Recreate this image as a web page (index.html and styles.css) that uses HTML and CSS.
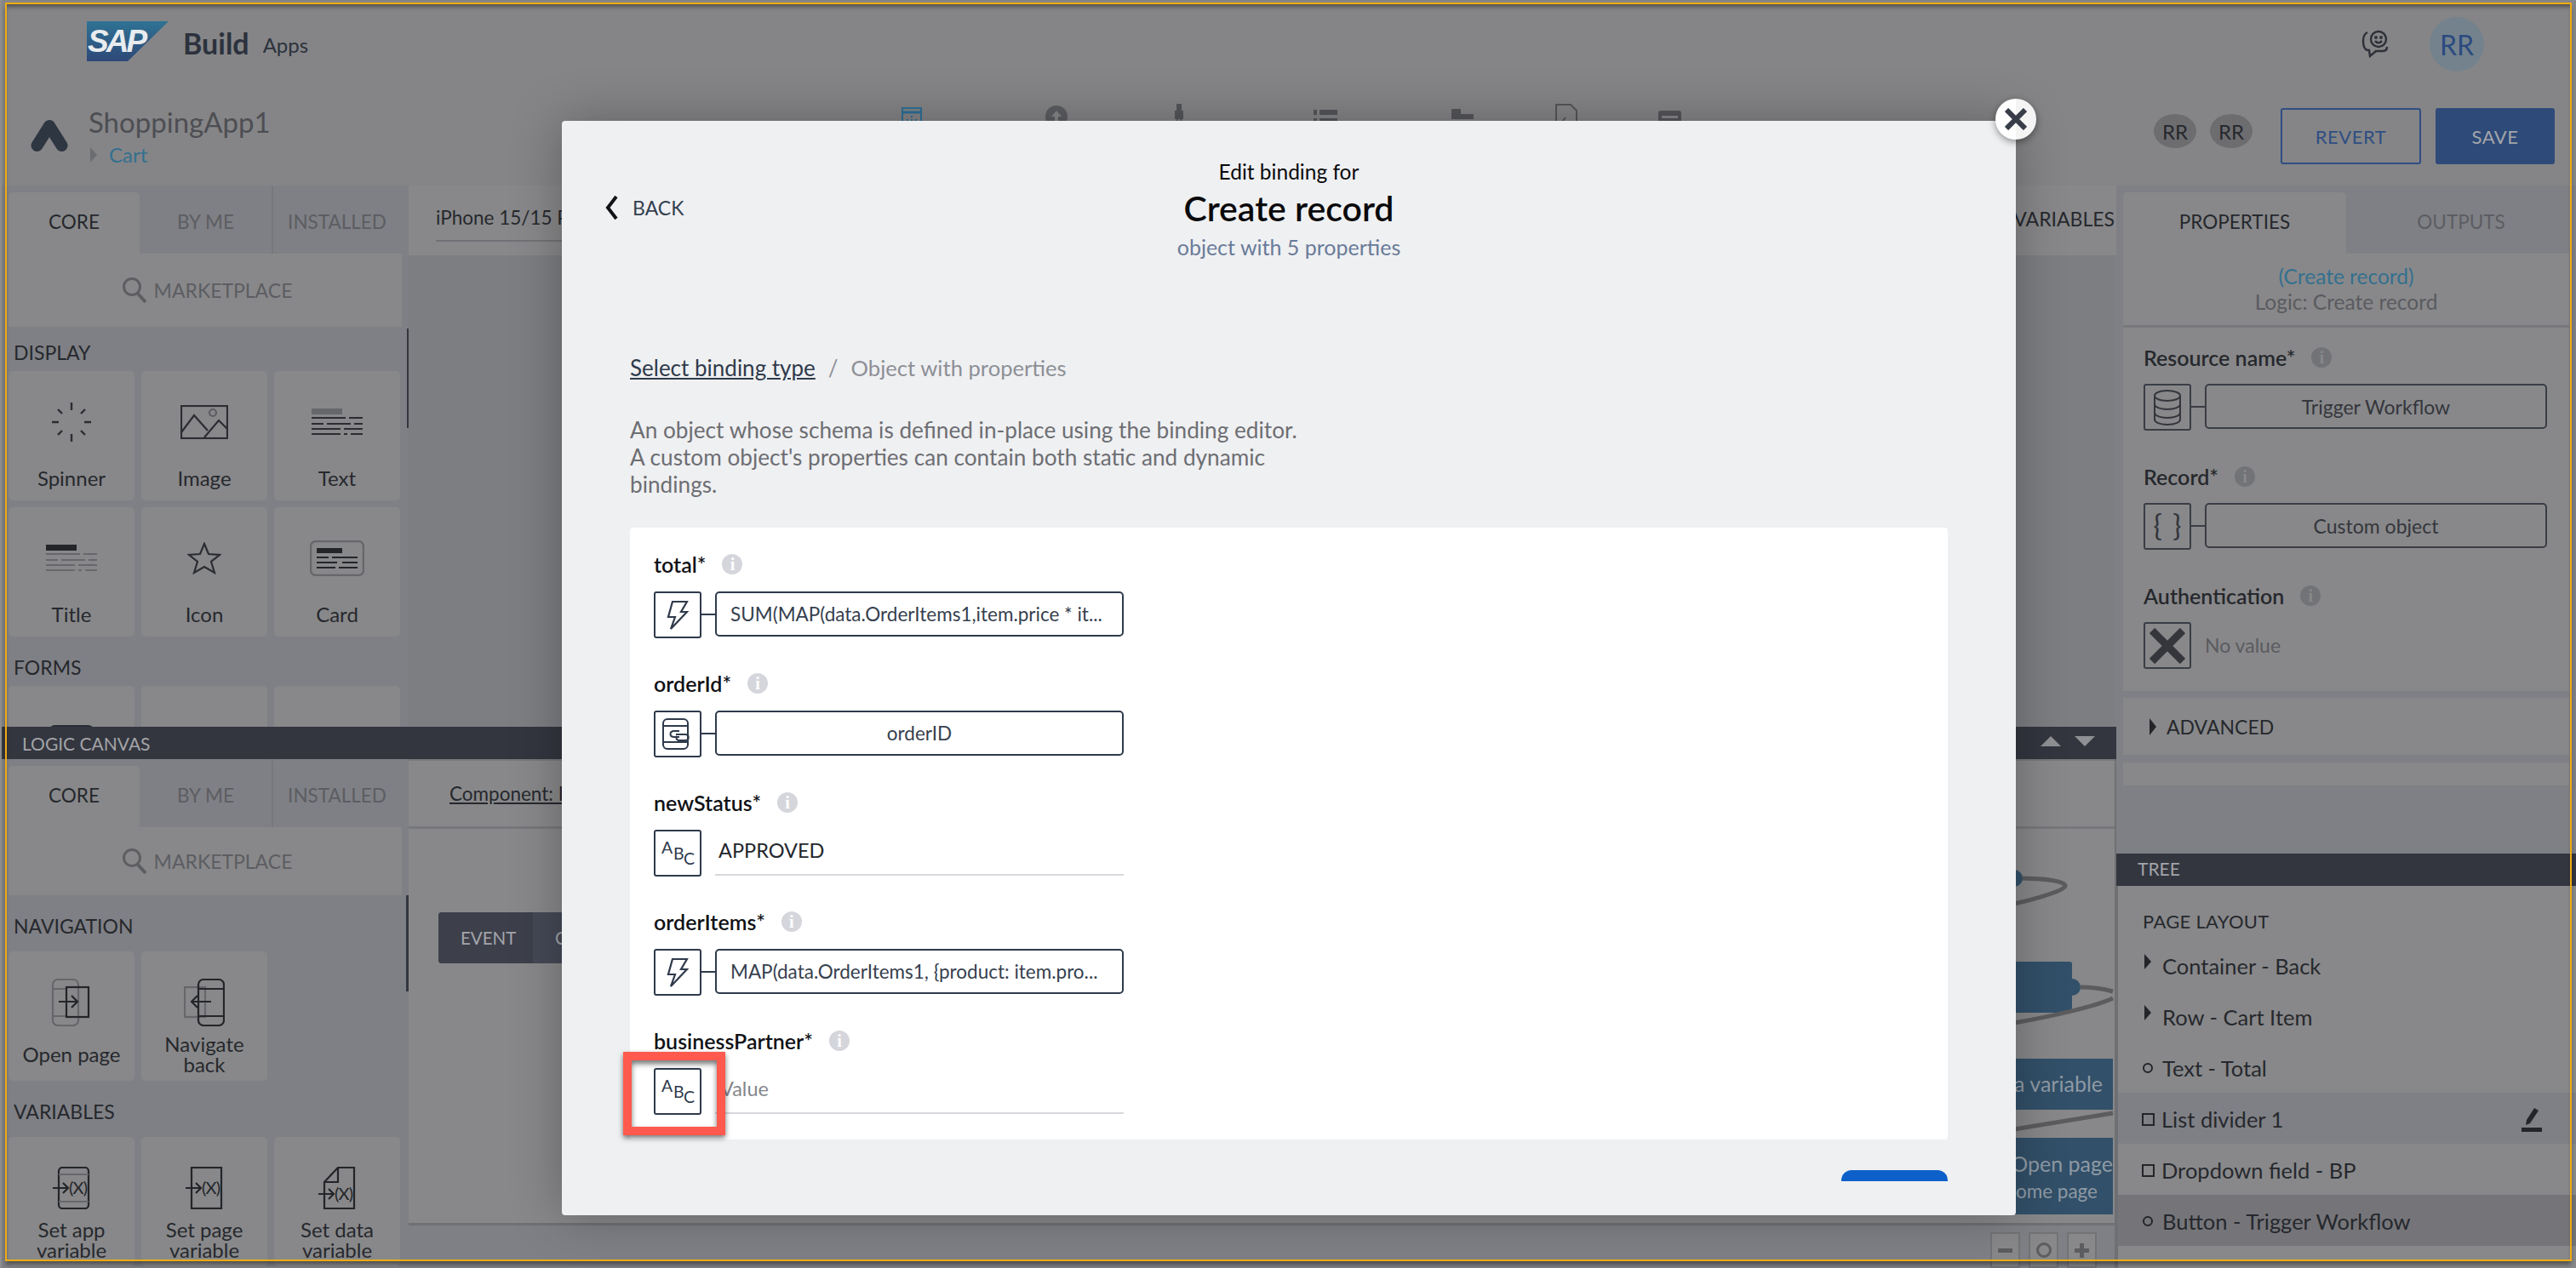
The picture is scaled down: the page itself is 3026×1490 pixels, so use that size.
FILE: index.html
```html
<!DOCTYPE html>
<html lang="en">
<head>
<meta charset="utf-8">
<title>SAP Build Apps</title>
<link rel="stylesheet" href="styles.css">
</head>
<body>
<div class="app">
  <header class="topbar">
    <div class="sap-logo">
      <svg width="96" height="47" viewBox="0 0 96 47"><defs><linearGradient id="sapg" x1="0" y1="0" x2="0" y2="1"><stop offset="0" stop-color="#2f7394"/><stop offset="1" stop-color="#2e4878"/></linearGradient></defs><polygon points="0,0 96,0 48,47 0,47" fill="url(#sapg)"/><text x="1" y="36" class="sap-text">SAP</text></svg>
    </div>
    <span class="build">Build</span><span class="apps">Apps</span>
    <div class="top-right">
      <svg width="32" height="34" viewBox="0 0 32 34" fill="none" stroke="#2d3038" stroke-width="2.4"><path d="M7 3C3 5 2 9 2 13C2 18 3 23 7 24H9L10 31L17 25H25C29 25 30 23 30 20"/><circle cx="20" cy="11" r="9"/><circle cx="17" cy="9" r=".8"/><circle cx="23" cy="9" r=".8"/><path d="M16 13C18 16 22 16 24 13"/></svg>
      <div class="avatar">RR</div>
    </div>
  </header>
  <div class="appbar">
    <div class="brand">
      <svg class="brand-mark" width="44" height="40" viewBox="0 0 44 40" fill="none"><path d="M7.5 31L22 8L36.5 31" stroke="#2e3642" stroke-width="14" stroke-linecap="round" stroke-linejoin="round"/></svg>
      <div class="brand-text">
        <div class="app-name">ShoppingApp1</div>
        <div class="crumb"><span class="crumb-arrow"></span><span>Cart</span></div>
      </div>
    </div>
    <div class="tools">
      <svg class="tool" width="24" height="30" viewBox="0 0 24 30" fill="none" stroke="#2c7099" stroke-width="2"><rect x="1" y="5" width="22" height="24"/><path d="M1 10H23" stroke-width="3"/><path d="M7 18V20M12 14V16M12 18V20M17 18V20"/></svg>
      <svg class="tool" width="28" height="30" viewBox="0 0 28 30"><circle cx="14" cy="15" r="13" fill="#5d5e62"/><path d="M14 8L20 15H16V24H12V15H8Z" fill="#88888a"/></svg>
      <svg class="tool" width="24" height="30" viewBox="0 0 24 30" fill="#55565a"><rect x="9" y="0" width="6" height="12"/><rect x="7" y="8" width="10" height="10"/><rect x="9" y="18" width="1.6" height="12"/><rect x="13.4" y="18" width="1.6" height="12"/></svg>
      <svg class="tool" width="28" height="30" viewBox="0 0 28 30" fill="#55565a"><rect x="0" y="7" width="4" height="6"/><rect x="7" y="7" width="21" height="6"/><rect x="0" y="17" width="4" height="6"/><rect x="7" y="17" width="21" height="6"/></svg>
      <svg class="tool" width="28" height="30" viewBox="0 0 28 30" fill="#55565a"><path d="M1 6H12V12H27V18H1Z"/><rect x="1" y="21" width="26" height="9"/></svg>
      <svg class="tool" width="26" height="30" viewBox="0 0 26 30" fill="none" stroke="#55565a" stroke-width="2"><path d="M1 1H18L25 8V30H1Z"/><path d="M3 28L12 16"/></svg>
      <svg class="tool" width="28" height="30" viewBox="0 0 28 30" fill="#55565a"><rect x="0" y="8" width="27" height="22" rx="3"/><rect x="4" y="14" width="19" height="3" fill="#88888a"/><rect x="4" y="20" width="19" height="3" fill="#88888a"/></svg>
    </div>
    <div class="actions">
      <div class="chip">RR</div>
      <div class="chip">RR</div>
      <button class="btn btn-outline">REVERT</button>
      <button class="btn btn-solid">SAVE</button>
    </div>
  </div>

  <div class="workspace">
    <div class="left-col">
      <section class="editor">
        <aside class="palette">
          <div class="tabs"><div class="tab tab-on">CORE</div><div class="tab">BY ME</div><div class="tab tab-sep">INSTALLED</div></div>
          <div class="market"><svg width="30" height="32" viewBox="0 0 30 32" fill="none" stroke="#5d5e62"><circle cx="12" cy="12" r="9.5" stroke-width="3"/><path d="M18 19L28 30" stroke-width="4"/></svg><span>MARKETPLACE</span></div>
          <div class="scroll-thumb"></div>
          <h3 class="sect sect-first">DISPLAY</h3>
          <div class="tiles">
            <div class="tile tile-tight"><div class="tile-icon"><svg width="48" height="48" viewBox="0 0 48 48" stroke="#2b2d33" stroke-width="2.4"><path d="M24 1V10M24 38V47M1 24H9M39 24H47M8 9L13 14M40 9L35 14M8 39L13 34M40 39L35 34"/></svg></div><div class="tile-label">Spinner</div></div>
            <div class="tile tile-tight"><div class="tile-icon"><svg width="56" height="40" viewBox="0 0 56 40" fill="none" stroke="#2b2d33" stroke-width="2.2"><rect x="1" y="1" width="54" height="38"/><path d="M1 32L16 12L32 30M28 38L45 18L55 28"/><circle cx="38" cy="9" r="4" stroke="#5d5e62"/></svg></div><div class="tile-label">Image</div></div>
            <div class="tile tile-tight"><div class="tile-icon"><svg width="60" height="32" viewBox="0 0 60 32" fill="none" stroke="#2b2d33" stroke-width="2"><rect x="0" y="0" width="36" height="7" fill="#66676b" stroke="none"/><path d="M0 11H40M44 11H60M0 18H14M18 18H46M50 18H60M0 24H34M38 24H60M0 30H34M38 30H42M46 30H60"/></svg></div><div class="tile-label">Text</div></div>
            <div class="tile tile-tight"><div class="tile-icon"><svg width="60" height="32" viewBox="0 0 60 32" fill="none" stroke="#66676b" stroke-width="2"><rect x="0" y="0" width="36" height="7" fill="#232529" stroke="none"/><path d="M0 11H40M44 11H60M0 18H14M18 18H46M50 18H60M0 24H34M38 24H60M0 30H34M38 30H42M46 30H60"/></svg></div><div class="tile-label">Title</div></div>
            <div class="tile tile-tight"><div class="tile-icon"><svg width="40" height="38" viewBox="0 0 40 38" fill="none" stroke="#2b2d33" stroke-width="2.2"><path d="M20 2L25 14L38 15L28 23L32 36L20 29L8 36L12 23L2 15L15 14Z"/></svg></div><div class="tile-label">Icon</div></div>
            <div class="tile tile-tight"><div class="tile-icon"><svg width="64" height="42" viewBox="0 0 64 42" fill="none" stroke="#232529" stroke-width="2"><rect x="1" y="1" width="62" height="40" rx="6" stroke="#66676b" stroke-width="2.4"/><rect x="8" y="9" width="30" height="6" fill="#232529" stroke="none"/><path d="M8 20H22M26 20H56M8 26H32M38 26H56M8 32H30M34 32H56"/></svg></div><div class="tile-label">Card</div></div>
          </div>
          <h3 class="sect sect-forms">FORMS</h3>
          <div class="tiles">
            <div class="tile tile-tight"><div class="tile-icon"><svg width="52" height="28" viewBox="0 0 52 28"><rect width="52" height="28" rx="6" fill="#2b2d33"/></svg></div><div class="tile-label"></div></div>
            <div class="tile tile-tight"></div>
            <div class="tile tile-tight"></div>
          </div>
        </aside>
        <div class="stage">
          <div class="stage-bar"><div class="device">iPhone 15/15 Pro</div><div class="vars">VARIABLES</div></div>
          <div class="stage-view"></div>
        </div>
      </section>

      <div class="logic-bar"><span>LOGIC CANVAS</span><div class="logic-arrows"><i class="arrow-up"></i><i class="arrow-down"></i></div></div>

      <section class="logic">
        <aside class="palette palette-low">
          <div class="tabs"><div class="tab tab-on">CORE</div><div class="tab">BY ME</div><div class="tab tab-sep">INSTALLED</div></div>
          <div class="market"><svg width="30" height="32" viewBox="0 0 30 32" fill="none" stroke="#5d5e62"><circle cx="12" cy="12" r="9.5" stroke-width="3"/><path d="M18 19L28 30" stroke-width="4"/></svg><span>MARKETPLACE</span></div>
          <div class="scroll-thumb scroll-thumb-low"></div>
          <h3 class="sect sect-low">NAVIGATION</h3>
          <div class="tiles">
            <div class="tile"><div class="tile-icon"><svg width="48" height="56" viewBox="0 0 48 56" fill="none" stroke-width="2.2"><rect x="2" y="1" width="30" height="54" rx="6" stroke="#66676b"/><path d="M2 12H18M2 44H18" stroke="#66676b"/><rect x="18" y="10" width="26" height="35" stroke="#232529"/><path d="M9 27H31M24 20L31 27L24 34" stroke="#232529"/></svg></div><div class="tile-label">Open page</div></div>
            <div class="tile"><div class="tile-icon"><svg width="48" height="56" viewBox="0 0 48 56" fill="none" stroke-width="2.2"><rect x="1" y="10" width="24" height="35" stroke="#66676b"/><rect x="17" y="1" width="30" height="54" rx="6" stroke="#232529"/><path d="M17 12H47M17 44H47" stroke="#232529"/><path d="M32 27H9M16 20L9 27L16 34" stroke="#232529"/></svg></div><div class="tile-label">Navigate back</div></div>
          </div>
          <h3 class="sect sect-low">VARIABLES</h3>
          <div class="tiles">
            <div class="tile"><div class="tile-icon"><svg width="44" height="50" viewBox="0 0 44 50" fill="none" stroke-width="2.2"><rect x="7" y="1" width="35" height="48" rx="4" stroke="#232529"/><path d="M7 9H42M7 41H42" stroke="#66676b"/><path d="M0 25H17M12 19L18 25L12 31" stroke="#232529"/><text x="19" y="32" class="var-x" textLength="22">(X)</text></svg></div><div class="tile-label">Set app variable</div></div>
            <div class="tile"><div class="tile-icon"><svg width="44" height="50" viewBox="0 0 44 50" fill="none" stroke-width="2.2"><rect x="7" y="1" width="35" height="48" stroke="#232529"/><path d="M0 25H17M12 19L18 25L12 31" stroke="#232529"/><text x="19" y="32" class="var-x" textLength="22">(X)</text></svg></div><div class="tile-label">Set page variable</div></div>
            <div class="tile"><div class="tile-icon"><svg width="44" height="50" viewBox="0 0 44 50" fill="none" stroke="#232529" stroke-width="2.2"><path d="M23 1H42V49H7V18Z"/><path d="M23 1V18H7"/><path d="M0 32H17M12 26L18 32L12 38"/><text x="19" y="39" class="var-x" textLength="22" stroke="none">(X)</text></svg></div><div class="tile-label">Set data variable</div></div>
          </div>
        </aside>
        <div class="flow">
          <div class="flow-bar"><span class="comp-link">Component: Button</span></div>
          <div class="flow-canvas">
            <div class="event-switch"><span class="ev ev-on">EVENT</span><span class="ev">COMPONENT</span></div>
            <div class="node node-a"></div>
            <div class="node node-c">Set data variable</div>
            <div class="node node-d"><div>Open page</div><small>Home page</small></div>
            <svg class="wires" width="116" height="420" viewBox="0 0 116 420" fill="none" stroke="#5c5c5e" stroke-width="5"><path d="M78 110C95 110 105 112 116 115M116 123C95 133 40 145 0 152M116 258L0 277"/><path d="M2 -18C40 -18 60 -14 60 -9C60 -4 30 5 0 12"/><circle cx="0" cy="-18" r="10" fill="#325069" stroke="none"/><circle cx="68" cy="110" r="10" fill="#325069" stroke="none"/></svg>
          </div>
          <div class="flow-foot"><div class="zoom-btn"><i class="z-minus"></i></div><div class="zoom-btn"><i class="z-ring"></i></div><div class="zoom-btn"><i class="z-plus"></i></div></div>
        </div>
      </section>
    </div>

    <div class="right-col">
      <div class="props">
        <div class="tabs tabs-props"><div class="tab tab-on">PROPERTIES</div><div class="tab">OUTPUTS</div></div>
        <div class="card card-title"><div class="prop-link">(Create record)</div><div class="prop-sub">Logic: Create record</div></div>
        <div class="card card-fields">
          <div class="field field-dim">
            <div class="field-label">Resource name*<span class="info">i</span></div>
            <div class="field-row"><div class="type-box"><svg width="36" height="44" viewBox="0 0 36 44" fill="none" stroke="#34363c" stroke-width="2"><ellipse cx="18" cy="8" rx="15" ry="6"/><path d="M3 8V36C3 39 9 42 18 42S33 39 33 36V8M3 18C3 21 9 24 18 24S33 21 33 18M3 28C3 31 9 34 18 34S33 31 33 28"/></svg></div><div class="wire-link"></div><div class="value-box value-center">Trigger Workflow</div></div>
          </div>
          <div class="field field-dim">
            <div class="field-label">Record*<span class="info">i</span></div>
            <div class="field-row"><div class="type-box"><span class="braces">{ }</span></div><div class="wire-link"></div><div class="value-box value-center">Custom object</div></div>
          </div>
          <div class="field field-dim">
            <div class="field-label">Authentication<span class="info">i</span></div>
            <div class="field-row"><div class="type-box"><svg width="42" height="42" viewBox="0 0 42 42" stroke="#34363c" stroke-width="9"><path d="M3 3L39 39M39 3L3 39"/></svg></div><div class="no-value">No value</div></div>
          </div>
        </div>
        <div class="card card-adv"><i class="caret"></i><span>ADVANCED</span></div>
        <div class="card card-blank"></div>
      </div>
      <div class="tree-bar">TREE</div>
      <div class="tree">
        <div class="tree-head">PAGE LAYOUT</div>
        <div class="tree-row"><i class="caret"></i>Container - Back</div>
        <div class="tree-row"><i class="caret"></i>Row - Cart Item</div>
        <div class="tree-row"><i class="dot"></i>Text - Total</div>
        <div class="tree-row tree-hover"><i class="sq"></i>List divider 1<svg class="pencil" width="24" height="32" viewBox="0 0 24 32"><path d="M15 3L20 6L10 21L5 23L6 17Z" fill="#232529"/><rect x="0" y="26" width="24" height="5" fill="#232529"/></svg></div>
        <div class="tree-row"><i class="sq"></i>Dropdown field - BP</div>
        <div class="tree-row tree-active"><i class="dot"></i>Button - Trigger Workflow</div>
      </div>
    </div>
  </div>
</div>

<div class="modal">
  <div class="modal-head">
    <div class="back"><svg width="16" height="30" viewBox="0 0 16 30" fill="none" stroke="#101216" stroke-width="4"><path d="M14 2L4 15L14 28"/></svg><span>BACK</span></div>
    <div class="modal-title">
      <div class="mt-small">Edit binding for</div>
      <div class="mt-big">Create record</div>
      <div class="mt-sub">object with 5 properties</div>
    </div>
    <div></div>
  </div>
  <div class="crumbs"><a class="crumb-link">Select binding type</a><span class="crumb-slash">/</span><span class="crumb-cur">Object with properties</span></div>
  <p class="desc">An object whose schema is defined in-place using the binding editor.<br>A custom object's properties can contain both static and dynamic bindings.</p>
  <div class="bind-panel">
    <div class="field">
      <div class="field-label">total*<span class="info">i</span></div>
      <div class="field-row"><div class="type-box"><svg width="26" height="34" viewBox="0 0 26 34" fill="none" stroke="#2f3a4b" stroke-width="2.2"><path d="M7 1H24L17 13H24L5 33L10 19H2Z"/></svg></div><div class="wire-link"></div><div class="value-box">SUM(MAP(data.OrderItems1,item.price * it...</div></div>
    </div>
    <div class="field">
      <div class="field-label">orderId*<span class="info">i</span></div>
      <div class="field-row"><div class="type-box"><svg width="36" height="38" viewBox="0 0 36 38" fill="none" stroke="#2f3a4b" stroke-width="2"><rect x="1" y="1" width="29" height="35" rx="5"/><path d="M1 9H30M1 28H30"/><path d="M20 15H14C8 15 8 22 14 22H20M16 19H27C32 19 32 26 27 26H20C16 26 16 22 17 21"/></svg></div><div class="wire-link"></div><div class="value-box value-center">orderID</div></div>
    </div>
    <div class="field">
      <div class="field-label">newStatus*<span class="info">i</span></div>
      <div class="field-row"><div class="type-box"><svg width="56" height="55" viewBox="0 0 56 55" class="abc"><text x="9" y="28">A</text><text x="23" y="35">B</text><text x="35" y="41">C</text></svg></div><div class="text-value text-filled">APPROVED</div></div>
    </div>
    <div class="field">
      <div class="field-label">orderItems*<span class="info">i</span></div>
      <div class="field-row"><div class="type-box"><svg width="26" height="34" viewBox="0 0 26 34" fill="none" stroke="#2f3a4b" stroke-width="2.2"><path d="M7 1H24L17 13H24L5 33L10 19H2Z"/></svg></div><div class="wire-link"></div><div class="value-box">MAP(data.OrderItems1, {product: item.pro...</div></div>
    </div>
    <div class="field">
      <div class="field-label">businessPartner*<span class="info">i</span></div>
      <div class="field-row"><div class="type-box"><svg width="56" height="55" viewBox="0 0 56 55" class="abc"><text x="9" y="28">A</text><text x="23" y="35">B</text><text x="35" y="41">C</text></svg></div><div class="text-value text-empty">Value</div></div>
    </div>
  </div>
  <div class="modal-foot"><div class="primary"></div></div>
</div>
<div class="close"><svg width="26" height="26" viewBox="0 0 26 26" stroke="#383d49" stroke-width="6"><path d="M2 2L24 24M24 2L2 24"/></svg></div>
<div class="callout"></div>
<div class="frame"></div>
</body>
</html>
```
FILE: styles.css
```css
* { box-sizing: border-box; }
html, body { margin: 0; height: 100%; overflow: hidden; }
body { background: #8e8e90; font-family: Lato, "Open Sans", sans-serif; color: #2b2d33; position: relative; }
i { display: block; font-style: normal; }

.app { width: 3026px; height: 1490px; padding-left: 2px; display: flex; flex-direction: column; }

/* top bar */
.topbar { height: 100px; flex: none; display: flex; align-items: flex-start; padding: 25px 0 0 100px; background: #858587; }
.sap-logo { width: 96px; height: 47px; }
.sap-text { font: italic bold 37px "Liberation Sans", sans-serif; fill: #e8ecef; letter-spacing: -3px; }
.build { margin-left: 17px; font-weight: 700; font-size: 34px; line-height: 52px; color: #2c323d; }
.apps { margin-left: 16px; font-size: 24px; line-height: 56px; color: #2c323d; }
.top-right { margin-left: auto; padding-right: 108px; display: flex; align-items: center; gap: 48px; margin-top: -5px; }
.avatar { width: 64px; height: 64px; border-radius: 50%; background: #74828d; color: #2b4a80; font-size: 32px; display: flex; align-items: center; justify-content: center; }

/* app bar */
.appbar { height: 118px; flex: none; display: flex; align-items: flex-start; background: #858587; }
.brand { width: 1057px; flex: none; display: flex; padding: 23px 0 0 34px; }
.brand-mark { margin-top: 17px; }
.brand-text { margin-left: 24px; }
.app-name { font-size: 33px; line-height: 40px; color: #4d4e53; }
.crumb { display: flex; align-items: center; gap: 14px; font-size: 24px; line-height: 38px; color: #34708f; }
.crumb-arrow { width: 0; height: 0; margin-left: 2px; border-left: 8px solid #6c6d70; border-top: 9px solid transparent; border-bottom: 9px solid transparent; }
.tools { display: grid; grid-template-columns: 168px 146px 170px 161px 123px 121px 28px; padding-top: 22px; }
.tool { display: block; }
.actions { margin-left: auto; padding: 27px 25px 0 0; display: flex; align-items: flex-start; }
.chip { width: 50px; height: 40px; margin: 7px 16px 0 0; border-radius: 50%; background: #6d6d70; color: #26282d; font-size: 24px; display: flex; align-items: center; justify-content: center; }
.btn { width: 165px; height: 66px; border-radius: 3px; font: 22px Lato, sans-serif; letter-spacing: .5px; }
.btn-outline { margin-left: 17px; background: transparent; border: 2px solid #2e4e82; color: #2e4e82; }
.btn-solid { margin-left: 17px; width: 140px; background: #2e4a78; border: 0; color: #a3a5aa; }

/* workspace */
.workspace { flex: 1; min-height: 0; display: flex; background: #7f8085; }
.left-col { width: 2484px; flex: none; display: flex; flex-direction: column; }
.right-col { width: 540px; flex: none; display: flex; flex-direction: column; }

.editor { height: 636px; flex: none; display: flex; }
.logic { flex: 1; min-height: 0; display: flex; }

.palette { width: 478px; flex: none; padding-left: 8px; background: #7f8085; overflow: hidden; position: relative; }
.tabs { display: grid; grid-template-columns: 154px 155px 152px; height: 80px; align-items: end; }
.tab { height: 80px; display: flex; align-items: center; justify-content: center; padding-top: 4px; font-size: 22.5px; color: #5c5d62; background: #7f8085; }
.tab-on { height: 72px; padding-top: 0; padding-bottom: 4px; border-radius: 5px 5px 0 0; background: #88888a; color: #26282d; }
.tab-sep { border-left: 2px solid #77787c; }
.market { width: 462px; height: 86px; display: flex; align-items: center; justify-content: center; gap: 8px; padding-left: 4px; background: #88888a; font-size: 23px; color: #5c5d62; }
.palette-low .market { height: 80px; }
.scroll-thumb { position: absolute; right: 0; top: 168px; width: 2px; height: 117px; background: #33363f; }
.scroll-thumb-low { top: 160px; height: 113px; width: 3px; }

.sect { margin: 0; font-weight: 400; font-size: 23px; line-height: 30px; color: #26282d; padding-left: 6px; }
.sect-first { padding-top: 15px; height: 52px; }
.sect-forms { padding-top: 21px; height: 58px; }
.sect-low { padding-top: 21px; height: 66px; }
.tiles { width: 460px; display: grid; grid-template-columns: repeat(3, 148px); gap: 8px; }
.tile { height: 152px; display: flex; flex-direction: column; border-radius: 5px; background: #88888a; padding-bottom: 7px; }
.tile-tight { padding-bottom: 2px; }
.tile-icon { height: 56px; margin-top: 32px; display: flex; align-items: center; justify-content: center; flex: none; }
.tile-label { margin-top: auto; height: 48px; display: flex; align-items: center; justify-content: center; text-align: center; font-size: 24px; line-height: 24px; color: #26282d; padding: 0 10px; }
.var-x { font: 20px Lato, sans-serif; fill: #232529; }

/* upper stage */
.stage { flex: 1; display: flex; flex-direction: column; min-width: 0; }
.stage-bar { height: 82px; flex: none; background: #88888a; display: flex; justify-content: space-between; padding: 0 2px 0 32px; }
.device { width: 500px; height: 66px; border-bottom: 2px solid #717276; font-size: 22.5px; line-height: 76px; color: #26282d; }
.vars { font-size: 23px; line-height: 78px; color: #26282d; }
.stage-view { flex: 1; background: #7d7e82; border-right: 2px solid #7f8085; }

/* logic bar */
.logic-bar { height: 38px; flex: none; background: #33363f; display: flex; align-items: center; justify-content: space-between; padding: 0 25px 0 24px; font-size: 21px; color: #a3a4a8; }
.logic-arrows { display: flex; gap: 16px; margin-bottom: 4px; }
.arrow-up, .arrow-down { width: 0; height: 0; border-left: 12px solid transparent; border-right: 12px solid transparent; }
.arrow-up { border-bottom: 12px solid #8f9094; }
.arrow-down { border-top: 12px solid #8f9094; }

/* logic flow */
.palette-low { height: 598px; }
.flow { flex: 1; min-width: 0; display: flex; flex-direction: column; background: #88888a; border-right: 2px solid #6f7073; }
.flow-bar { height: 82px; flex: none; border-bottom: 3px solid #77787b; border-top: 2px solid #77787b; padding-left: 48px; font-size: 22.5px; line-height: 78px; color: #26282d; }
.comp-link { text-decoration: underline; }
.flow-canvas { height: 466px; flex: none; position: relative; overflow: hidden; border-bottom: 3px solid #6f7073; }
.event-switch { position: absolute; left: 35px; top: 98px; display: flex; height: 60px; width: 400px; border-radius: 4px; overflow: hidden; background: #454956; font-size: 20.5px; color: #a3a5aa; }
.ev { display: flex; align-items: center; padding: 0 26px; }
.ev-on { background: #3d404b; width: 111px; }
.wires { position: absolute; left: 1886px; top: 76px; overflow: visible; }
.node { position: absolute; background: #325069; color: #8f9aa5; border-radius: 3px; display: flex; flex-direction: column; align-items: flex-end; justify-content: center; }
.node-a { left: 1700px; top: 156px; width: 254px; height: 60px; }
.node-c { left: 1700px; top: 270px; width: 302px; height: 60px; font-size: 25px; padding: 0 12px 2px 0; flex-direction: row; justify-content: flex-end; align-items: center; border-radius: 0; }
.node-d { left: 1700px; top: 363px; width: 302px; height: 90px; font-size: 25px; align-items: flex-end; padding-right: 0; border-radius: 0; }
.node-d small { font-size: 22.5px; margin-right: 18px; margin-top: 4px; }
.flow-foot { flex: 1; background: #7f8085; display: flex; justify-content: flex-end; gap: 10px; padding: 8px 21px 0 0; }
.zoom-btn { width: 35px; height: 42px; background: #88888a; border: 2px solid #727376; display: flex; align-items: center; justify-content: center; margin-bottom: -8px; }
.z-minus { width: 17px; height: 5px; background: #5c5d60; }
.z-ring { width: 18px; height: 18px; border: 3px solid #5c5d60; border-radius: 50%; }
.z-plus { width: 17px; height: 17px; background: linear-gradient(#5c5d60, #5c5d60) center/17px 5px no-repeat, linear-gradient(#5c5d60, #5c5d60) center/5px 17px no-repeat; }

/* properties */
.props { height: 785px; flex: none; padding-left: 8px; display: flex; flex-direction: column; background: #7f8085; }
.tabs-props { grid-template-columns: 262px 270px; }
.card { width: 524px; background: #88888a; }
.card-title { height: 87px; border-bottom: 3px solid #78797d; text-align: center; padding-top: 12px; }
.prop-link { font-size: 24.5px; line-height: 30px; color: #34708f; }
.prop-sub { font-size: 24.5px; line-height: 30px; color: #5a5b60; }
.card-fields { height: 427px; padding: 20px 0 0 24px; }
.card-adv { height: 67px; margin-top: 8px; display: flex; align-items: center; gap: 12px; padding-left: 31px; font-size: 23px; color: #26282d; }
.card-blank { height: 27px; margin-top: 9px; }
.caret { width: 0; height: 0; border-left: 8px solid #232529; border-top: 10px solid transparent; border-bottom: 10px solid transparent; }

/* fields */
.field { margin-bottom: 38px; }
.field-label { height: 30px; display: flex; align-items: center; font-size: 25px; font-weight: 600; color: #111216; margin-bottom: 17px; }
.info { width: 24px; height: 24px; margin-left: 19px; border-radius: 50%; background: #d5d6dc; color: #fff; font: 700 20px "Liberation Serif", serif; display: flex; align-items: center; justify-content: center; }
.field-row { display: flex; align-items: flex-start; }
.type-box { width: 56px; height: 55px; flex: none; border: 2px solid #2f3a4b; border-radius: 3px; display: flex; align-items: center; justify-content: center; }
.abc { display: block; margin: -2px; flex: none; }
.abc text { font: 19.5px Lato, sans-serif; fill: #2f3a4b; }
.wire-link { width: 16px; height: 2px; margin-top: 26px; background: #2f3a4b; flex: none; }
.value-box { width: 480px; height: 53px; border: 2px solid #2f3a4b; border-radius: 5px; padding-left: 16px; display: flex; align-items: center; font-size: 22.5px; color: #36404e; white-space: nowrap; overflow: hidden; }
.value-center { justify-content: center; padding-left: 0; }
.text-value { width: 480px; height: 54px; margin-left: 16px; border-bottom: 2px solid #d8d9de; font-size: 23.5px; line-height: 48px; padding-left: 4px; }
.text-filled { color: #22262d; }
.text-empty { color: #85878d; padding-left: 6px; }

.field-dim { margin-bottom: 39px; }
.field-dim:last-child { margin-bottom: 0; }
.field-dim .field-label { color: #26282d; margin-bottom: 16px; }
.field-dim .info { background: #727377; color: #88888a; }
.field-dim .type-box, .field-dim .value-box { border-color: #3a3d45; }
.field-dim .value-box { width: 402px; color: #34363c; font-size: 23px; }
.field-dim .wire-link { background: #3a3d45; }
.braces { font-size: 34px; line-height: 1; word-spacing: 4px; color: #34363c; margin-top: -4px; }
.no-value { margin-left: 16px; line-height: 54px; font-size: 23px; color: #5a5b60; }

/* tree */
.tree-bar { height: 38px; flex: none; background: #33363f; font-size: 21px; line-height: 36px; padding-left: 25px; color: #a3a4a8; }
.tree { flex: 1; background: #88888a; border-left: 2px solid #6f7073; }
.tree-head { height: 63px; padding: 27px 0 0 29px; font-size: 22px; line-height: 30px; letter-spacing: .3px; color: #26282d; }
.tree-row { height: 60px; display: flex; align-items: center; padding: 2px 0 0 29px; font-size: 25.5px; color: #26282d; position: relative; }
.tree-row .caret { margin: -10px 13px 0 2px; border-top-width: 9px; border-bottom-width: 9px; width: 8px; }
.tree-row .dot { width: 12px; height: 12px; border: 2px solid #232529; border-radius: 50%; margin-right: 11px; }
.tree-row .sq { width: 15px; height: 15px; border: 2px solid #232529; margin: 0 8px 0 -1px; }
.tree-hover { background: #7f8085; }
.tree-active { background: #757579; }
.pencil { margin-left: auto; margin-right: 40px; }

/* modal */
.modal { position: absolute; left: 660px; top: 142px; width: 1708px; height: 1286px; border-radius: 4px; background: #eff0f2; box-shadow: 0 0 60px rgba(0,0,0,.28); overflow: hidden; }
.modal-head { display: grid; grid-template-columns: 1fr auto 1fr; padding-top: 46px; }
.back { display: flex; align-items: center; gap: 17px; padding: 14px 0 0 50px; font-size: 23px; color: #33404f; height: 60px; margin-top: 19px; }
.modal-title { text-align: center; }
.mt-small { font-size: 24.5px; line-height: 28px; color: #0a0a0c; }
.mt-big { font-size: 41px; line-height: 58px; font-weight: 600; color: #0a0a0c; }
.mt-sub { font-size: 25px; line-height: 32px; color: #6a7b98; }
.crumbs { margin: 110px 0 0 80px; font-size: 26px; line-height: 32px; display: flex; }
.crumb-link { color: #2f3a4b; text-decoration: underline; }
.crumb-slash { margin: 0 15px; color: #8d8f96; }
.crumb-cur { color: #8d8f96; font-size: 25.6px; }
.desc { margin: 41px 0 0 80px; width: 830px; font-size: 26.2px; line-height: 32px; color: #6d6e72; }
.bind-panel { margin: 35px 0 0 80px; width: 1548px; height: 719px; padding: 28px 0 0 28px; background: #fff; border-radius: 4px; overflow: hidden; }
.modal-foot { margin: 36px 80px 0 0; height: 13px; display: flex; justify-content: flex-end; overflow: hidden; }
.primary { width: 125px; height: 53px; border-radius: 12px; background: #0d60c9; flex: none; }

.close { position: absolute; left: 2344px; top: 116px; width: 48px; height: 48px; border-radius: 50%; background: linear-gradient(90deg, #fff 50%, #f4f4f4 50%); box-shadow: 0 3px 8px rgba(0,0,0,.4); display: flex; align-items: center; justify-content: center; }

.callout { position: absolute; left: 732px; top: 1236px; width: 120px; height: 98px; border: 10px solid #ff5a4d; box-shadow: 0 3px 6px rgba(0,0,0,.55), inset 0 4px 6px rgba(0,0,0,.55); }
.frame { position: absolute; left: 6px; top: 3px; width: 3015px; height: 1479px; border: 2px solid #efab12; box-shadow: inset 0 5px 5px -2px rgba(0,0,0,.4), 0 5px 5px -1px rgba(0,0,0,.4); pointer-events: none; }
```
